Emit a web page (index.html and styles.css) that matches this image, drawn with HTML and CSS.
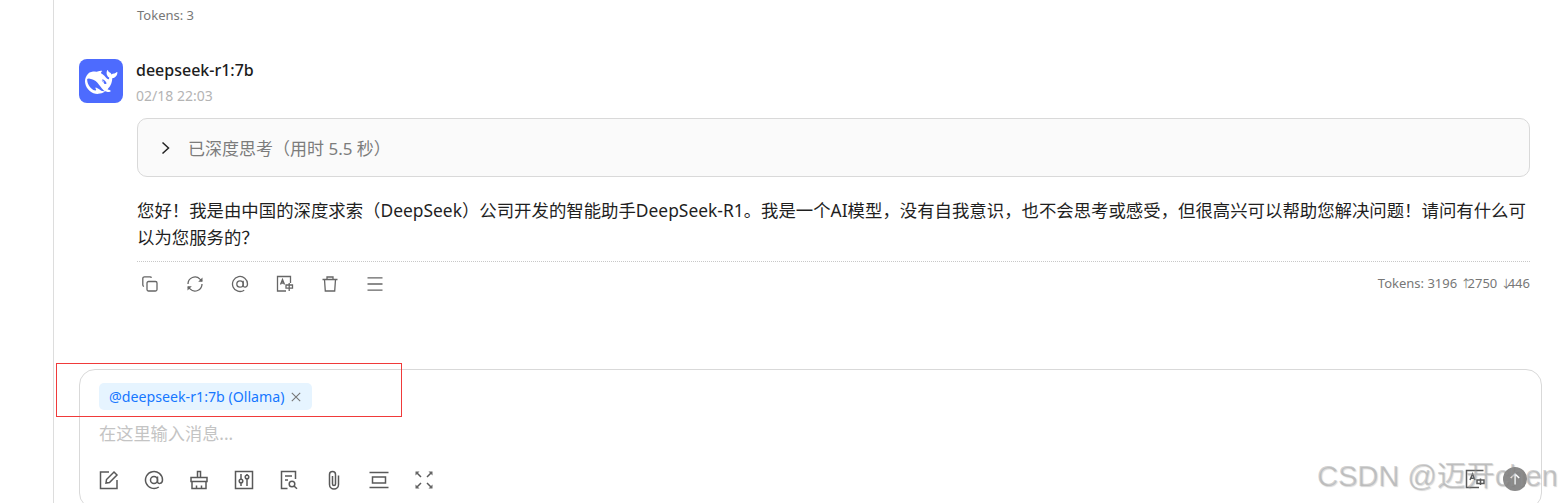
FILE: index.html
```html
<!DOCTYPE html>
<html lang="zh-CN">
<head>
  <meta charset="UTF-8" />
  <title>Cherry Studio</title>
  <link rel="stylesheet" href="styles.css">
</head>
<body>
  <div class="sidebar"></div>

  <main class="chat">
    <div class="prev-tokens">Tokens: 3</div>

    <!-- Mensaje -->
    <section class="message">
      <div class="message-head">
        <svg class="avatar" viewBox="0 0 44 44">
          <rect width="44" height="44" rx="8" fill="#4d6bfe"/>
          <path transform="translate(6 7) scale(1.35)" fill="#fff" d="M23.748 4.482c-.254-.124-.364.113-.512.234-.051.039-.094.09-.137.136-.372.397-.806.657-1.373.626-.829-.046-1.537.214-2.163.848-.133-.782-.575-1.248-1.247-1.548-.352-.156-.708-.311-.955-.65-.172-.241-.219-.51-.305-.774-.055-.16-.11-.323-.293-.35-.2-.031-.278.136-.356.276-.313.572-.434 1.202-.422 1.84.027 1.436.633 2.58 1.838 3.393.137.093.172.187.129.323-.082.28-.18.552-.266.833-.055.179-.137.217-.329.14a5.526 5.526 0 01-1.736-1.18c-.857-.828-1.631-1.742-2.597-2.458a11.365 11.365 0 00-.689-.471c-.985-.957.13-1.743.388-1.836.27-.098.093-.432-.779-.428-.872.004-1.67.295-2.687.684a3.055 3.055 0 01-.465.137 9.597 9.597 0 00-2.883-.102c-1.885.21-3.39 1.102-4.497 2.623C.082 8.606-.231 10.684.152 12.85c.403 2.284 1.569 4.175 3.36 5.653 1.858 1.533 3.997 2.284 6.438 2.14 1.482-.085 3.133-.284 4.994-1.86.47.234.962.327 1.78.397.63.059 1.236-.03 1.705-.128.735-.156.684-.837.419-.961-2.155-1.004-1.682-.595-2.113-.926 1.096-1.296 2.746-2.642 3.392-7.003.05-.347.007-.565 0-.845-.004-.17.035-.237.23-.256a4.173 4.173 0 001.545-.475c1.396-.763 1.96-2.015 2.093-3.517.02-.23-.004-.467-.247-.588zM11.581 18c-2.089-1.642-3.102-2.183-3.52-2.16-.392.024-.321.471-.235.763.09.288.207.486.371.739.114.167.192.416-.113.603-.673.416-1.842-.14-1.897-.167-1.361-.802-2.5-1.86-3.301-3.307-.774-1.393-1.224-2.887-1.298-4.482-.02-.386.093-.522.477-.592a4.696 4.696 0 011.529-.039c2.132.312 3.946 1.265 5.468 2.774.868.86 1.525 1.887 2.202 2.891.72 1.066 1.494 2.082 2.48 2.914.348.292.625.514.891.677-.802.09-2.14.11-3.054-.614zm1-6.44a.306.306 0 01.415-.287.302.302 0 01.2.288.306.306 0 01-.31.307.303.303 0 01-.305-.308zm3.11 1.596c-.2.081-.399.151-.59.16a1.245 1.245 0 01-.798-.254c-.274-.23-.47-.358-.552-.758a1.73 1.73 0 01.016-.588c.07-.327-.008-.537-.239-.727-.187-.156-.426-.199-.688-.199a.559.559 0 01-.254-.078c-.11-.054-.2-.19-.114-.358.028-.054.16-.186.192-.21.356-.202.767-.136 1.146.016.352.144.618.408 1.001.782.391.451.462.576.685.914.176.265.336.537.445.848.067.195-.019.354-.25.452z"/>
        </svg>
        <div class="message-meta">
          <div class="model-name">deepseek-r1:7b</div>
          <div class="message-time">02/18 22:03</div>
        </div>
      </div>

      <div class="message-body">
        <div class="think-box">
          <svg class="think-arrow" viewBox="0 0 12 14"><path d="M2.500 1.500 8.500 7l-6 5.500"/></svg>
          <span>已深度思考（用时 5.5 秒）</span>
        </div>

        <p class="message-text">您好！我是由中国的深度求索（DeepSeek）公司开发的智能助手DeepSeek-R1。我是一个AI模型，没有自我意识，也不会思考或感受，但很高兴可以帮助您解决问题！请问有什么可以为您服务的？</p>

        <div class="message-footer">
          <div class="footer-icons">
            <svg class="icon" viewBox="0 0 18 18"><rect x="6" y="6.500" width="10" height="9.500" rx="1.500"/><path d="M3 11.500c-.7-.2-1.200-.8-1.200-1.500V3.500C1.800 2.600 2.600 1.800 3.500 1.800H9c.7 0 1.300.4 1.500 1"/></svg>
            <svg class="icon" viewBox="0 0 18 18"><path d="M2 9a7 7 0 0 1 12-4.900L16 6M16 9a7 7 0 0 1-12 4.900L2 12"/><path class="solid" d="M16.500 2.500v4.300h-4.300zM1.500 15.500v-4.300h4.300z"/></svg>
            <svg class="icon" viewBox="0 0 18 18"><circle cx="9" cy="9" r="3.200"/><path d="M12.200 5.800v4.600c0 2.600 4.300 2.300 4.300-1.400a7.500 7.500 0 1 0-3.300 6.200"/></svg>
            <svg class="icon" viewBox="0 0 18 18"><path d="M10 16H1.500V1.500h13V8"/><path d="m4.500 9.500 2-5 2 5M5.200 8h2.600M10 10h6.500v3.200H10zM13.200 8v8"/></svg>
            <svg class="icon" viewBox="0 0 18 18"><path d="M1.500 4.500h15M3.500 4.500l.8 11.500h9.400l.8-11.500M6 4.500V2h6v2.500"/></svg>
            <svg class="icon" viewBox="0 0 18 18"><path d="M1.500 2.800h15M1.500 9h15M1.500 15.200h15"/></svg>
          </div>
          <div class="token-count">Tokens: 3196 <span class="arrow">↑</span>2750 <span class="arrow">↓</span>446</div>
        </div>
      </div>
    </section>

    <!-- Caja de entrada -->
    <section class="input-box">
      <div class="mention-row">
        <span class="mention-tag">@deepseek-r1:7b (Ollama)
          <svg class="tag-close" viewBox="0 0 10 10"><path d="m.8.800 8.400 8.400M9.200.800.8 9.200"/></svg>
        </span>
      </div>
      <div class="input-placeholder">在这里输入消息...</div>
      <div class="toolbar">
        <div class="toolbar-left">
          <svg class="tool" viewBox="0 0 20 20"><path d="M10 2H1.500v16.500H18V10"/><path d="m7 13 .5-3.500L15 2l3 3-7.500 7.500z"/></svg>
          <svg class="tool" viewBox="0 0 20 20"><circle cx="10" cy="10" r="3.500"/><path d="M13.500 6.500v5c0 2.900 5 2.600 5-1.500a8.500 8.500 0 1 0-3.700 7"/></svg>
          <svg class="tool" viewBox="0 0 20 20"><path d="M8.500 7V1.500h3V7M2 7.500h16v4H2zM3 11.500v7h14v-7M7.500 18.500v-3M12.500 18.500v-3"/></svg>
          <svg class="tool" viewBox="0 0 20 20"><rect x="1.500" y="1.500" width="17" height="17"/><path d="M7 4v5M7 13v3M13 4v1M13 9v7"/><circle cx="7" cy="11" r="1.800"/><circle cx="13" cy="7" r="1.800"/></svg>
          <svg class="tool" viewBox="0 0 20 20"><path d="M8.500 18.500H2.500V1.500h14V9"/><path d="M6 6h7M6 10h3"/><circle cx="13" cy="14" r="2.800"/><path d="m15 16 3 2.800"/></svg>
          <svg class="tool" viewBox="0 0 20 20"><path d="M14.500 5.500v9a4.500 4.500 0 0 1-9 0V4.500a3 3 0 0 1 6 0v9.500a1.500 1.500 0 0 1-3 0V6"/></svg>
          <svg class="tool" viewBox="0 0 20 20"><path d="M.5 2.500h19M.5 17.500h19M3.500 7h13v6h-13z"/></svg>
          <svg class="tool" viewBox="0 0 20 20"><path d="M3 3l4 4M17 3l-4 4M3 17l4-4M17 17l-4-4"/><path class="solid" d="M1.500 1.500h4l-4 4zM18.500 1.500v4l-4-4zM1.500 18.500v-4l4 4zM18.500 18.500h-4l4-4z"/></svg>
        </div>
        <div class="toolbar-right">
          <svg class="tool" viewBox="0 0 20 20"><path d="M10 18.500H1.500V1.500h17M1 18.500h13"/><path d="m5 11 2.500-6 2.500 6M5.800 9.200h3.400M12 11h7v3.500h-7zM15.500 9.500v6.500"/></svg>
          <div class="send-button">
            <svg viewBox="0 0 14 14"><path d="M7 12.500V2M2.800 6 7 2l4.200 4"/></svg>
          </div>
        </div>
      </div>
    </section>
  </main>

  <!-- Marcas sobre la captura -->
  <div class="red-mark"></div>
  <div class="watermark">CSDN @迈开chen</div>
</body>
</html>
```

FILE: styles.css
```css
html, body {
  height: 503px;
  overflow: hidden;
}

body {
  margin: 0;
  display: flex;
  font-family: "Noto Sans", "Noto Sans CJK SC", sans-serif;
  background: #fff;
  color: #222;
}

.sidebar {
  width: 53px;
  flex: none;
  border-right: 1px solid #ddd;
}

.chat {
  flex: 1;
  height: 503px;
  overflow: hidden;
  padding: 0 18px 0 25px;
  min-width: 0;
}

.prev-tokens {
  margin: 7px 0 0 58px;
  font-size: 13px;
  line-height: 17px;
  color: #777;
}

.message {
  margin-top: 35px;
  padding-right: 12px;
}

.message-head {
  display: flex;
  gap: 13px;
}

.avatar {
  width: 44px;
  height: 44px;
  flex: none;
}

.model-name {
  font-size: 16px;
  line-height: 22px;
  font-weight: 500;
  color: #1c1c1c;
}

.message-time {
  margin-top: 6px;
  font-size: 14px;
  line-height: 18px;
  color: #b4b4b4;
}

.message-body {
  margin: 13px 0 0 58px;
}

.think-box {
  height: 57px;
  display: flex;
  align-items: center;
  gap: 16px;
  padding-left: 22px;
  background: #fafafa;
  border: 1px solid #d9d9d9;
  border-radius: 10px;
  font-size: 17px;
  color: #7c7c7c;
}

.think-arrow {
  width: 12px;
  height: 14px;
  fill: none;
  stroke: #222;
  stroke-width: 1.500;
}

.message-text {
  margin: 20px 0 0;
  font-size: 17.400px;
  line-height: 27px;
  color: #1f1f1f;
}

.message-footer {
  margin-top: 10px;
  padding-top: 12px;
  border-top: 1px dotted #c8c8c8;
  display: flex;
  justify-content: space-between;
  align-items: center;
}

.footer-icons {
  display: flex;
  gap: 27px;
  padding-left: 4px;
}

.icon {
  width: 18px;
  height: 18px;
  fill: none;
  stroke: #666;
  stroke-width: 1.300;
}

.solid {
  fill: #666;
  stroke: none;
}

.token-count {
  font-size: 13px;
  line-height: 18px;
  color: #777;
}

.arrow {
  font-size: 11px;
  letter-spacing: -4px;
}

.input-box {
  margin-top: 76px;
  height: 140px;
  padding: 13px 14px 0 19px;
  border: 1px solid #d9d9d9;
  border-radius: 16px;
  box-sizing: border-box;
}

.mention-row {
  display: flex;
}

.mention-tag {
  display: flex;
  align-items: center;
  gap: 6px;
  height: 27px;
  padding: 0 11px 0 10px;
  background: #e6f4ff;
  border-radius: 5px;
  font-size: 14.200px;
  color: #1677ff;
}

.tag-close {
  width: 10px;
  height: 10px;
  fill: none;
  stroke: #777;
  stroke-width: 1.100;
}

.input-placeholder {
  margin-top: 12px;
  font-size: 17.200px;
  line-height: 24px;
  color: #c4c4c4;
}

.toolbar {
  margin-top: 23px;
  display: flex;
  justify-content: space-between;
  align-items: center;
}

.toolbar-left {
  display: flex;
  gap: 25px;
}

.toolbar-right {
  display: flex;
  align-items: center;
  gap: 18px;
  margin-top: -2px;
}

.tool {
  width: 20px;
  height: 20px;
  fill: none;
  stroke: #595959;
  stroke-width: 1.500;
}

.send-button {
  width: 24px;
  height: 24px;
  border-radius: 50%;
  background: #8a8a8a;
  display: flex;
  align-items: center;
  justify-content: center;
}

.send-button svg {
  width: 14px;
  height: 14px;
  fill: none;
  stroke: #fff;
  stroke-width: 1.500;
}

.red-mark {
  position: absolute;
  left: 56px;
  top: 363px;
  width: 344px;
  height: 52px;
  border: 1px solid #f03a3a;
}

.watermark {
  position: absolute;
  left: 1317px;
  top: 458px;
  font-family: "Liberation Sans", "Noto Sans CJK SC", sans-serif;
  font-size: 29px;
  line-height: 36px;
  white-space: nowrap;
  color: rgba(150, 150, 150, 0.42);
  text-shadow: 1px 1px 1px rgba(120, 120, 120, 0.3);
}
```
